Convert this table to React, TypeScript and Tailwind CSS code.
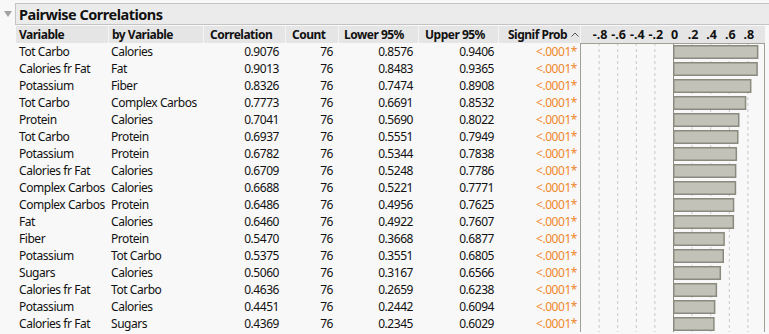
import React from "react";

type Row = {
  variable: string;
  by: string;
  corr: number;
  count: number;
  lower: string;
  upper: string;
};

const rows: Row[] = [
  { variable: "Tot Carbo", by: "Calories", corr: 0.9076, count: 76, lower: "0.8576", upper: "0.9406" },
  { variable: "Calories fr Fat", by: "Fat", corr: 0.9013, count: 76, lower: "0.8483", upper: "0.9365" },
  { variable: "Potassium", by: "Fiber", corr: 0.8326, count: 76, lower: "0.7474", upper: "0.8908" },
  { variable: "Tot Carbo", by: "Complex Carbos", corr: 0.7773, count: 76, lower: "0.6691", upper: "0.8532" },
  { variable: "Protein", by: "Calories", corr: 0.7041, count: 76, lower: "0.5690", upper: "0.8022" },
  { variable: "Tot Carbo", by: "Protein", corr: 0.6937, count: 76, lower: "0.5551", upper: "0.7949" },
  { variable: "Potassium", by: "Protein", corr: 0.6782, count: 76, lower: "0.5344", upper: "0.7838" },
  { variable: "Calories fr Fat", by: "Calories", corr: 0.6709, count: 76, lower: "0.5248", upper: "0.7786" },
  { variable: "Complex Carbos", by: "Calories", corr: 0.6688, count: 76, lower: "0.5221", upper: "0.7771" },
  { variable: "Complex Carbos", by: "Protein", corr: 0.6486, count: 76, lower: "0.4956", upper: "0.7625" },
  { variable: "Fat", by: "Calories", corr: 0.646, count: 76, lower: "0.4922", upper: "0.7607" },
  { variable: "Fiber", by: "Protein", corr: 0.547, count: 76, lower: "0.3668", upper: "0.6877" },
  { variable: "Potassium", by: "Tot Carbo", corr: 0.5375, count: 76, lower: "0.3551", upper: "0.6805" },
  { variable: "Sugars", by: "Calories", corr: 0.506, count: 76, lower: "0.3167", upper: "0.6566" },
  { variable: "Calories fr Fat", by: "Tot Carbo", corr: 0.4636, count: 76, lower: "0.2659", upper: "0.6238" },
  { variable: "Potassium", by: "Calories", corr: 0.4451, count: 76, lower: "0.2442", upper: "0.6094" },
  { variable: "Calories fr Fat", by: "Sugars", corr: 0.4369, count: 76, lower: "0.2345", upper: "0.6029" },
];

const ROW_H = 17;
const ZERO = 93;
const SCALE = 93;
const ticks = [-0.8, -0.6, -0.4, -0.2, 0, 0.2, 0.4, 0.6, 0.8];

const tickLabel = (t: number) => {
  if (t === 0) return "0";
  const s = Math.abs(t).toFixed(1).replace("0.", ".");
  return t < 0 ? "-" + s : s;
};

const CorrChart: React.FC<{ data: Row[] }> = ({ data }) => {
  const h = data.length * ROW_H;
  return (
    <svg width={185} height={h} className="block">
      {ticks.map((t) => (
        <line
          key={t}
          x1={ZERO + t * SCALE + 0.5}
          x2={ZERO + t * SCALE + 0.5}
          y1={0}
          y2={h}
          stroke={t === 0 ? "#8c8c80" : "#c8c8c8"}
          strokeDasharray={t === 0 ? undefined : "3 3"}
        />
      ))}
      {data.map((r, i) => (
        <rect
          key={i}
          x={ZERO + 0.75}
          y={i * ROW_H + 2.75}
          width={r.corr * SCALE - 0.5}
          height={12.5}
          fill="#c2c2b9"
          stroke="#8a8a7e"
          strokeWidth={1.5}
        />
      ))}
      <line x1={0.5} x2={0.5} y1={0} y2={h} stroke="#a0a094" />
      <line x1={184.5} x2={184.5} y1={0} y2={h} stroke="#a0a094" />
      <line x1={0} x2={185} y1={0.5} y2={0.5} stroke="#a0a094" />
    </svg>
  );
};

export default function App() {
  return (
    <div
      className="w-[769px] h-[334px] overflow-hidden bg-[#f8f8f8] text-[12px] text-[#111] pt-[3px] whitespace-nowrap"
      style={{ fontFamily: '"Noto Sans", "Open Sans", sans-serif' }}
    >
      {/* title bar */}
      <div className="flex items-center">
        <div className="w-[15px] flex justify-center">
          <svg width="10" height="8" viewBox="0 0 10 8">
            <path d="M1 1 L9 1 L5 7 Z" fill="#a3a3a3" />
          </svg>
        </div>
        <div className="flex-1 h-[22px] bg-[#ebebeb] border border-r-0 border-[#c4c4c4] flex items-center pl-[3px]">
          <span className="font-bold text-[14.5px] leading-none tracking-[-0.5px]">Pairwise Correlations</span>
        </div>
      </div>

      <div className="flex mt-[1px] ml-[16px]">
        {/* table */}
        <div className="w-[564px]">
          <div className="flex h-[17px] bg-[#e5e5e5] font-bold leading-[17px] tracking-[-0.5px]">
            <div className="w-[92px] pl-[3px]">Variable</div>
            <div className="w-[95px] pl-[3px] border-l border-[#f4f4f4]">by Variable</div>
            <div className="w-[82px] pl-[6px] border-l border-[#f4f4f4]">Correlation</div>
            <div className="w-[53px] pl-[6px] border-l border-[#f4f4f4]">Count</div>
            <div className="w-[80px] pl-[5px] border-l border-[#f4f4f4]">Lower 95%</div>
            <div className="w-[80px] pl-[6px] border-l border-[#f4f4f4]">Upper 95%</div>
            <div className="w-[82px] pl-[9px] border-l border-[#f4f4f4] flex items-center gap-[4px]">
              <span>Signif Prob</span>
              <svg width="8" height="5" viewBox="0 0 8 5" className="shrink-0">
                <path d="M0.5 4.5 L4 1 L7.5 4.5" fill="none" stroke="#555" strokeWidth="1" />
              </svg>
            </div>
          </div>
          {rows.map((r, i) => (
            <div key={i} className="flex h-[17px] leading-[17px] tracking-[-0.45px]">
              <div className="w-[92px] pl-[3px]">{r.variable}</div>
              <div className="w-[95px] pl-[3px]">{r.by}</div>
              <div className="w-[82px] pr-[6px] text-right">{r.corr.toFixed(4)}</div>
              <div className="w-[53px] pr-[5px] text-right">{r.count}</div>
              <div className="w-[80px] pr-[5px] text-right">{r.lower}</div>
              <div className="w-[80px] pr-[4px] text-right">{r.upper}</div>
              <div className="w-[82px] pr-[3px] text-right text-[#f0872a]">&lt;.0001*</div>
            </div>
          ))}
        </div>

        {/* chart column */}
        <div className="w-[185px]">
          <div className="h-[17px] bg-[#e5e5e5] border-l border-[#f4f4f4]">
            <svg width={185} height={17} className="block">
              {ticks.map((t) => (
                <text
                  key={t}
                  x={ZERO + t * SCALE + 0.5}
                  y={13}
                  textAnchor="middle"
                  fontWeight="bold"
                  fontSize="12.5"
                  fill="#111"
                >
                  {tickLabel(t)}
                </text>
              ))}
            </svg>
          </div>
          <CorrChart data={rows} />
        </div>
      </div>
    </div>
  );
}
